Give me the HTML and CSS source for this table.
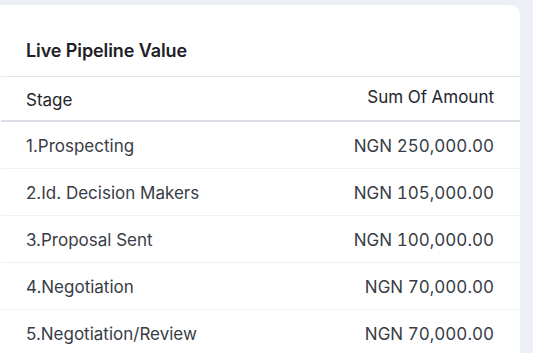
FILE: index.html
```html
<!DOCTYPE html>
<html lang="en">
<head>
    <title>Live Pipeline Value</title>
    <link rel="stylesheet" href="styles.css">
</head>
<body>
    <div class="card">
        <h2 class="card-title">Live Pipeline Value</h2>
        <div class="table">
            <div class="row head">
                <span class="stage">Stage</span>
                <span class="amount">Sum Of Amount</span>
            </div>
            <div class="row">
                <span class="stage">1.Prospecting</span>
                <span class="amount">NGN 250,000.00</span>
            </div>
            <div class="row">
                <span class="stage">2.Id. Decision Makers</span>
                <span class="amount">NGN 105,000.00</span>
            </div>
            <div class="row">
                <span class="stage">3.Proposal Sent</span>
                <span class="amount">NGN 100,000.00</span>
            </div>
            <div class="row">
                <span class="stage">4.Negotiation</span>
                <span class="amount">NGN 70,000.00</span>
            </div>
            <div class="row">
                <span class="stage">5.Negotiation/Review</span>
                <span class="amount">NGN 70,000.00</span>
            </div>
        </div>
    </div>
</body>
</html>
```

FILE: styles.css
```css
:root {
    --page-bg: #eef0f8;
    --white: #ffffff;
    --title-text: #1e2128;
    --head-text: #22252c;
    --row-text: #383c46;
    --line: #e3e5ea;
    --head-line: #dcdee6;
    --row-line: #f0f1f3;
}

body {
    margin: 0;
    background-color: var(--page-bg);
    font-family: 'Inter', 'Noto Sans', sans-serif;
    overflow: hidden;
}

.card {
    margin-top: 5px;
    width: 520px;
    height: 360px;
    background-color: var(--white);
    border-radius: 0 10px 0 0;
}

.card-title {
    margin: 0 0 0 1px;
    padding: 36px 26px 15px 25px;
    font-size: 18px;
    line-height: 20px;
    font-weight: 600;
    letter-spacing: -0.1px;
    color: var(--title-text);
    border-bottom: 1px solid var(--line);
}

.row {
    display: flex;
    justify-content: space-between;
    margin-left: 1px;
    padding: 14px 26px 12px 25px;
    font-size: 17px;
    line-height: 20px;
    color: var(--row-text);
    border-bottom: 1px solid var(--row-line);
}

.amount {
    font-variant-numeric: tabular-nums;
}

.row.head {
    height: 45px;
    box-sizing: border-box;
    padding-top: 0;
    padding-bottom: 0;
    color: var(--head-text);
    border-bottom: 2px solid var(--head-line);
}

.row.head .stage {
    padding-top: 13px;
}

.row.head .amount {
    padding-top: 10px;
}
```
